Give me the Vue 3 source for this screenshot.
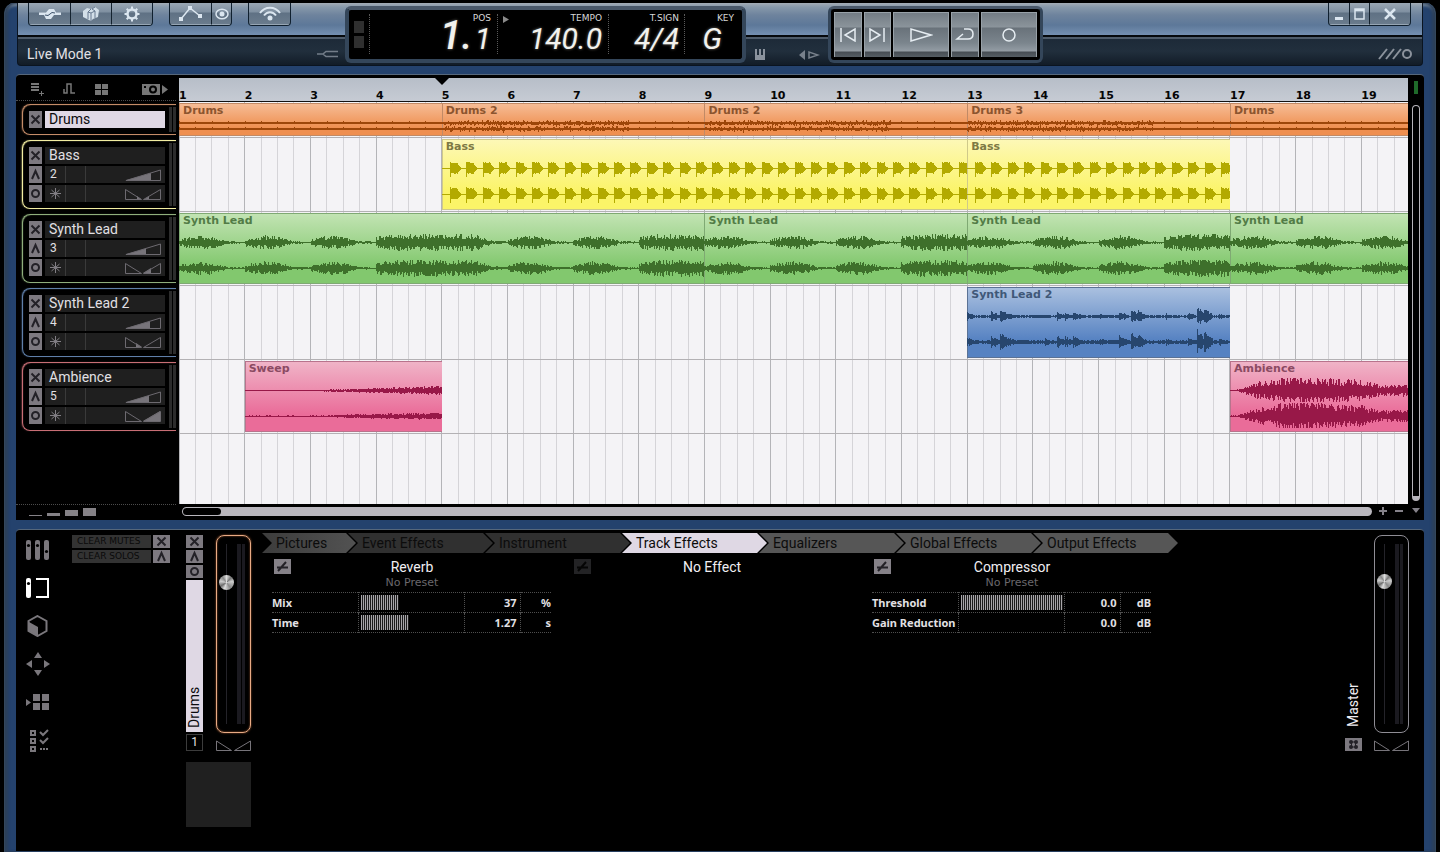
<script setup>
import { ref } from 'vue'

const BARS = 18.71
const BAR_W = 65.64

function makeRandom(seed) {
  let s = seed
  return () => {
    s = (s * 1664525 + 1013904223) % 4294967296
    return s / 4294967296
  }
}

function envelope(points, x) {
  for (let i = 1; i < points.length; i++) {
    if (x <= points[i][0]) {
      const [x0, y0] = points[i - 1]
      const [x1, y1] = points[i]
      return y0 + ((y1 - y0) * (x - x0)) / (x1 - x0)
    }
  }
  return points[points.length - 1][1]
}

const leadPeaks = [
  [0, 4, 4], [24, 6, 5], [33, 3, 8], [36, 9, 5], [43, 5, 3], [66, 8, 2], [78, 4, 3], [90, 5, 5], [98, 6, 4],
  [106, 6, 5], [133, 6, 3], [152, 8, 5], [164, 7, 7], [171, 6, 6], [199, 6, 3], [221, 5, 4], [230, 5, 9], [237, 6, 8], [252, 5, 3]
]

const shapes = {
  ticks(x) {
    const p = (x + 0.5) % 16.41
    return p < 1 ? [2, 1] : [1, 1]
  },
  beats(x, rnd) {
    if (x > 186) return shapes.ticks(x)
    return [1 + rnd() * rnd() * 3, 1 + rnd() * rnd() * rnd() * 3]
  },
  bass(x, rnd) {
    const p = (x + 9) % 16.41
    if (x < 7 || p > 11) return [0.5, 0.5]
    if (p < 1) return [7, 9]
    if (p < 8) return [5.5 + rnd(), 4.5 + rnd()]
    return [Math.max(0.5, 12 - p), Math.max(0.5, 12 - p)]
  },
  synth(x, rnd) {
    const bar = Math.floor(x / BAR_W)
    const p = x / BAR_W - bar
    let a
    if (bar % 4 === 3) a = envelope([[0, 5], [0.3, 7], [1, 7]], p)
    else if (bar % 8 === 4) a = envelope([[0, 7], [0.5, 7], [0.75, 2], [1, 1]], p)
    else a = envelope([[0, 3], [0.3, 6], [0.5, 5], [0.72, 1.4], [1, 0.8]], p)
    return [a * (0.45 + rnd() * 0.8), a * (0.45 + rnd() * 0.8)]
  },
  lead(x, rnd, low) {
    let a = 0.8 + rnd()
    for (const [c, w, h] of leadPeaks) {
      const d = x - c
      if (d >= 0 && d < w + 3) a = Math.max(a, h * (1 - d / (w + 6)) * (0.6 + rnd() * 0.5))
    }
    const k = low ? 1.35 : 1
    return [a * k, a * k * (0.7 + rnd() * 0.3)]
  },
  sweep(x, rnd, low) {
    const a = envelope([[0, 0.8], [75, 0.8], [130, 2.5], [197, low ? 3.5 : 4.5]], x)
    return [a * (0.5 + rnd() * 0.6), a * (0.5 + rnd() * 0.6)]
  },
  swell(x, rnd) {
    const a = envelope([[0, 0.7], [8, 1], [28, 8], [40, 9], [62, 14], [80, 14], [100, 11], [130, 10], [150, 5], [180, 6]], x)
    return [Math.min(13, a * (0.45 + rnd() * 0.75)), Math.min(12, a * (0.45 + rnd() * 0.65))]
  }
}

function wave(shape, width, mid, seed, low) {
  const rnd = makeRandom(seed)
  let top = ''
  let bottom = ''
  for (let x = 0; x < width; x++) {
    const [u, d] = shapes[shape](x, rnd, low)
    const yu = (mid - u).toFixed(1)
    const yd = (mid + d).toFixed(1)
    top += `L${x} ${yu}L${x + 1} ${yu}`
    bottom = `L${x + 1} ${yd}L${x} ${yd}` + bottom
  }
  return `M0 ${mid}${top}${bottom}Z`
}

function clip(name, from, to, shape, seed) {
  const width = Math.round((Math.min(to, 1 + BARS) - from) * BAR_W)
  const small = shape === 'ticks' || shape === 'beats'
  return {
    name,
    column: `${from} / ${Math.min(to, 20)}`,
    width,
    height: small ? 34 : 72,
    d: small
      ? wave(shape, width, 21, seed) + wave(shape, width, 27, seed + 7)
      : wave(shape, width, 30, seed) + wave(shape, width, 56, seed + 5, true)
  }
}

const lanes = [
  {
    color: 'orange',
    clips: [
      clip('Drums', 1, 5, 'ticks', 3),
      clip('Drums 2', 5, 9, 'beats', 11),
      clip('Drums 2', 9, 13, 'beats', 12),
      clip('Drums 3', 13, 17, 'beats', 13),
      clip('Drums', 17, 20, 'ticks', 3)
    ]
  },
  { color: 'yellow', clips: [clip('Bass', 5, 13, 'bass', 21), clip('Bass', 13, 17, 'bass', 22)] },
  {
    color: 'green',
    clips: [
      clip('Synth Lead', 1, 9, 'synth', 31),
      clip('Synth Lead', 9, 13, 'synth', 32),
      clip('Synth Lead', 13, 17, 'synth', 33),
      clip('Synth Lead', 17, 20, 'synth', 34)
    ]
  },
  { color: 'blue', clips: [clip('Synth Lead 2', 13, 17, 'lead', 41)] },
  { color: 'pink', clips: [clip('Sweep', 2, 5, 'sweep', 51), clip('Ambience', 17, 20, 'swell', 52)] }
]

const gridLines = Array.from({ length: 75 }, (_, i) => ({
  x: `${((i / 4 / BARS) * 100).toFixed(3)}%`,
  bar: i % 4 === 0
}))

const tracks = [
  { name: 'Drums', color: 'orange', selected: true },
  { name: 'Bass', color: 'yellow', num: 2, vol: 26, fill: 'M12 8l4 3h-4zM20 11l4-3v3z' },
  { name: 'Synth Lead', color: 'green', num: 3, vol: 21, fill: 'M18 11l8-5v5z' },
  { name: 'Synth Lead 2', color: 'blue', num: 4, vol: 25, fill: 'M17 11l-6-4v4z' },
  { name: 'Ambience', color: 'pink', num: 5, vol: 24, fill: 'M18 11L35 1v10z' }
]

const tabs = [
  { name: 'Pictures', tone: 'mid' },
  { name: 'Event Effects', tone: 'dark' },
  { name: 'Instrument', tone: 'dark' },
  { name: 'Track Effects', tone: 'active' },
  { name: 'Equalizers', tone: 'light' },
  { name: 'Global Effects', tone: 'light' },
  { name: 'Output Effects', tone: 'light' }
]

const effects = ref([
  {
    name: 'Reverb',
    preset: 'No Preset',
    params: [
      { name: 'Mix', level: 37, value: '37', unit: '%' },
      { name: 'Time', level: 47, value: '1.27', unit: 's' }
    ]
  },
  { name: 'No Effect', off: true, params: [] },
  {
    name: 'Compressor',
    preset: 'No Preset',
    params: [
      { name: 'Threshold', level: 100, value: '0.0', unit: 'dB' },
      { name: 'Gain Reduction', level: 0, value: '0.0', unit: 'dB' }
    ]
  }
])

const trackLevel = ref(81)
const masterLevel = ref(82)
</script>

<template>
  <div class="window">
    <header class="header">
      <div class="head-left">
        <div class="head-top">
          <div class="btn-group">
            <button class="hbtn" aria-label="Connections">
              <svg width="24" height="14" viewBox="0 0 24 14"><path d="M1 5.500h7l3-3.500h5l2 3.500h5v2.500h-7l-3 4H8L6 8H1z" fill="#dbe6f0" /><path d="M7 8l3 .5 4-3 3 .5" fill="none" stroke="#3b5069" /></svg>
            </button>
            <button class="hbtn" aria-label="Packs">
              <svg width="18" height="16" viewBox="0 0 18 16"><path d="M1 5l4-3 4 1 4-2 4 3-1 7-5 2-2 2-4-2-4-2z" fill="#d3dfe9" /><path d="M6 13V6l3-3M6 6l3 1v8M9 7l4-2v7M13 1l-3 2 3 2" fill="none" stroke="#66798f" /></svg>
            </button>
            <button class="hbtn" aria-label="Settings">
              <svg width="16" height="16" viewBox="0 0 16 16"><circle cx="8" cy="8" r="4.500" fill="none" stroke="#dbe6f0" stroke-width="2.500" /><path d="M8 .5v3M8 12.500v3M.5 8h3M12.500 8h3M2.700 2.700l2 2M11.300 11.300l2 2M2.700 13.300l2-2M11.300 4.700l2-2" stroke="#dbe6f0" stroke-width="2" /></svg>
            </button>
          </div>
          <div class="btn-group">
            <button class="hbtn" aria-label="Automation">
              <svg width="24" height="17" viewBox="0 0 24 17"><path d="M2 14L11 3l10 8" fill="none" stroke="#dbe6f0" stroke-width="1.500" /><path d="M0 12h4v4H0zM9 1h4v4H9zM19 9h4v4h-4z" fill="#dbe6f0" /></svg>
            </button>
            <button class="hbtn narrow" aria-label="Visibility">
              <svg width="14" height="12" viewBox="0 0 14 12"><ellipse cx="7" cy="6" rx="6" ry="4.800" fill="none" stroke="#dbe6f0" stroke-width="1.500" /><circle cx="7" cy="6" r="2.500" fill="#dbe6f0" /></svg>
            </button>
          </div>
          <div class="btn-group">
            <button class="hbtn" aria-label="Network">
              <svg width="22" height="15" viewBox="0 0 22 15"><path d="M1 7c5-7 15-7 20 0M5 9.500c3-4.500 9-4.500 12 0" fill="none" stroke="#dbe6f0" stroke-width="2" /><circle cx="11" cy="12" r="2.500" fill="#dbe6f0" /></svg>
            </button>
          </div>
        </div>
        <div class="head-strip">
          <span class="song">Live Mode 1</span>
          <svg width="22" height="10" viewBox="0 0 22 10"><path d="M0 5h7M21 2.500H9L6 5l3 2.500h12" fill="none" stroke="#737d89" stroke-width="1.500" /></svg>
        </div>
      </div>

      <section class="lcd" aria-label="Transport display">
        <div class="lcd-leds"><i></i><i></i></div>
        <div class="cell pos">
          <span class="lbl">POS</span>
          <span class="val"><b>1.</b>1</span>
        </div>
        <div class="cell tempo">
          <svg class="tri" width="6" height="7" viewBox="0 0 6 7"><path d="M0 0l6 3.500L0 7z" fill="#8a8a8a" /></svg>
          <span class="lbl">TEMPO</span>
          <span class="val">140.0</span>
        </div>
        <div class="cell sign"><span class="lbl">T.SIGN</span><span class="val">4/4</span></div>
        <div class="cell key"><span class="lbl">KEY</span><span class="val">G</span></div>
      </section>

      <div class="head-mid">
        <svg width="10" height="11" viewBox="0 0 10 11"><path d="M0 0h2v6h2V0h2v6h2V0h2v11H0z" fill="#8a929d" /></svg>
        <svg width="21" height="10" viewBox="0 0 21 10"><path d="M0 5l6-5v10z" fill="#78818c" /><path d="M10 2v6l9-3z" fill="none" stroke="#78818c" stroke-width="1.500" /></svg>
      </div>

      <section class="transport" aria-label="Transport">
        <button class="tbtn" aria-label="Previous"><svg width="18" height="14" viewBox="0 0 18 14"><path d="M2 0v14M16 1v12L6 7z" fill="none" stroke="#e6edf2" stroke-width="1.500" /></svg></button>
        <button class="tbtn" aria-label="Next"><svg width="18" height="14" viewBox="0 0 18 14"><path d="M16 0v14M2 1v12l10-6z" fill="none" stroke="#e6edf2" stroke-width="1.500" /></svg></button>
        <button class="tbtn wide" aria-label="Play"><svg width="24" height="16" viewBox="0 0 24 16"><path d="M2 2v12l20-6z" fill="none" stroke="#e6edf2" stroke-width="1.500" /></svg></button>
        <button class="tbtn" aria-label="Loop"><svg width="20" height="14" viewBox="0 0 20 14"><path d="M9 1h4c3 0 5 2 5 5s-2 5-5 5H2l6-5" fill="none" stroke="#e6edf2" stroke-width="1.500" /></svg></button>
        <button class="tbtn wide" aria-label="Record"><svg width="16" height="16" viewBox="0 0 16 16"><circle cx="8" cy="8" r="6" fill="none" stroke="#e6edf2" stroke-width="1.500" /></svg></button>
      </section>

      <div class="head-right">
        <div class="head-top end">
          <div class="btn-group">
            <button class="wbtn" aria-label="Minimize"><svg width="10" height="14" viewBox="0 0 10 14"><path d="M1 10h8v3H1z" fill="#dbe6f0" /></svg></button>
            <button class="wbtn" aria-label="Maximize"><svg width="11" height="12" viewBox="0 0 11 12"><path d="M1 1h9v10H1zM1 2.500h9" fill="none" stroke="#dbe6f0" stroke-width="1.500" /></svg></button>
            <button class="wbtn close" aria-label="Close"><svg width="14" height="12" viewBox="0 0 14 12"><path d="M2 1l10 10M12 1L2 11" stroke="#dbe6f0" stroke-width="2.500" /></svg></button>
          </div>
        </div>
        <div class="head-strip end">
          <svg width="36" height="12" viewBox="0 0 36 12"><path d="M1 11L9 1M8 11l8-10M15 11l8-10" stroke="#8b929c" stroke-width="2" /><circle cx="29" cy="6" r="4" fill="none" stroke="#8b929c" stroke-width="2" /></svg>
        </div>
      </div>
    </header>

    <main class="arranger">
      <aside class="tracks">
        <div class="tools">
          <button class="plain" aria-label="Add track"><svg width="14" height="14" viewBox="0 0 14 14"><path d="M1 2h8M1 5h8M1 8h8" stroke="#777" stroke-width="2" /><path d="M9 11.500h5M11.500 9v5" stroke="#777" /></svg></button>
          <button class="plain" aria-label="Envelope"><svg width="13" height="12" viewBox="0 0 13 12"><path d="M1 6v4h3V1h4v9h4" fill="none" stroke="#777" stroke-width="1.500" /></svg></button>
          <button class="plain" aria-label="Grid"><svg width="13" height="11" viewBox="0 0 13 11"><path d="M0 0h6v5H0zM7 0h6v5H7zM0 6h6v5H0zM7 6h6v5H7z" fill="#777" /></svg></button>
          <button class="plain cam" aria-label="Snapshot"><svg width="28" height="13" viewBox="0 0 28 13"><path d="M1 1h18v11H1z" fill="#777" /><circle cx="12" cy="6.500" r="4" fill="#000" /><circle cx="12" cy="6.500" r="2" fill="#777" /><path d="M3 3h2v2H3z" fill="#000" /><path d="M21 2l6 4.500-6 4.500z" fill="#777" /></svg></button>
        </div>
        <ul class="track-list">
          <li v-for="t in tracks" :key="t.name" class="track" :class="[t.color, { selected: t.selected }]">
            <div class="track-btns">
              <button class="sq" :aria-label="'Mute ' + t.name"><svg width="13" height="13" viewBox="0 0 13 13"><path d="M2.500 2.500l8 8M10.500 2.500l-8 8" stroke="#232127" stroke-width="2" /></svg></button>
              <template v-if="!t.selected">
                <button class="sq" :aria-label="'Solo ' + t.name"><svg width="13" height="13" viewBox="0 0 13 13"><path d="M3 11L6.500 3 10 11" fill="none" stroke="#232127" stroke-width="2" /></svg></button>
                <button class="sq" :aria-label="'Record ' + t.name"><svg width="13" height="13" viewBox="0 0 13 13"><circle cx="6.500" cy="6.500" r="3.500" fill="none" stroke="#232127" stroke-width="2" /></svg></button>
              </template>
            </div>
            <div class="track-rows">
              <div class="row name">{{ t.name }}</div>
              <template v-if="!t.selected">
                <div class="row split">
                  <span class="num">{{ t.num }}</span><span class="blank"></span>
                  <svg width="36" height="12" viewBox="0 0 36 12"><path :d="`M0 11.500L${t.vol} ${11.5 - t.vol * 0.29}V11.500z`" fill="#77747a" /><path d="M1 11.500L35.500 1v10.500z" fill="none" stroke="#6d6a70" /></svg>
                </div>
                <div class="row split">
                  <span class="num"><svg width="11" height="11" viewBox="0 0 11 11"><path d="M5.500 0v11M0 5.500h11M1.500 2l8 7M9.500 2l-8 7" stroke="#827f85" /></svg></span><span class="blank"></span>
                  <svg width="36" height="12" viewBox="0 0 36 12"><path :d="t.fill" fill="#77747a" /><path d="M.5 11.500V1.500l16 10zM35.500 11.500V1.500L18.500 11.500z" fill="none" stroke="#6d6a70" /></svg>
                </div>
              </template>
            </div>
            <div class="leds"><i></i><i></i></div>
          </li>
        </ul>
      </aside>

      <section class="canvas" aria-label="Timeline">
        <div class="ruler">
          <span v-for="n in 19" :key="n">{{ n }}</span>
          <svg class="head-mark" width="14" height="7" viewBox="0 0 14 7"><path d="M0 0h14L7 7z" /></svg>
        </div>
        <div class="lanes">
          <svg class="grid" aria-hidden="true">
            <line v-for="g in gridLines" :key="g.x" :x1="g.x" :x2="g.x" y1="0" y2="100%" :class="{ bar: g.bar }" />
          </svg>
          <div v-for="l in lanes" :key="l.color" class="lane" :class="l.color">
            <div v-for="(c, i) in l.clips" :key="i" class="clip" :style="{ gridColumn: c.column }">
              <svg :viewBox="`0 0 ${c.width} ${c.height}`" preserveAspectRatio="none"><path :d="c.d" /></svg>
              <span class="clip-name">{{ c.name }}</span>
            </div>
          </div>
        </div>
      </section>

      <div class="vside">
        <i class="lamp"></i>
        <div class="vscroll"></div>
      </div>

      <div class="sizes"><button aria-label="Tiny rows"></button><button aria-label="Small rows"></button><button aria-label="Medium rows"></button><button aria-label="Large rows"></button></div>
      <div class="hside">
        <div class="hscroll"><i></i></div>
        <button class="plain" aria-label="Zoom in"><svg width="8" height="8" viewBox="0 0 8 8"><path d="M4 0v8M0 4h8" stroke="#85828a" stroke-width="2" /></svg></button>
        <button class="plain" aria-label="Zoom out"><svg width="8" height="8" viewBox="0 0 8 8"><path d="M0 4h8" stroke="#85828a" stroke-width="2" /></svg></button>
      </div>
      <button class="plain more" aria-label="More"><svg width="8" height="5" viewBox="0 0 8 5"><path d="M0 0h8L4 5z" fill="#85828a" /></svg></button>
    </main>

    <section class="mixer">
      <nav class="modes">
        <button class="plain" aria-label="Mixer"><svg width="24" height="22" viewBox="0 0 24 22"><rect x="0" y="1" width="5" height="20" rx="2" fill="#7a777c" /><rect x="9" y="1" width="5" height="20" rx="2" fill="#7a777c" /><rect x="18" y="1" width="5" height="20" rx="2" fill="#7a777c" /><circle cx="2.500" cy="6.500" r="1.600" /><circle cx="11.500" cy="6.500" r="1.600" /><circle cx="20.500" cy="12.500" r="1.600" /></svg></button>
        <button class="plain" aria-label="Track view"><svg width="24" height="22" viewBox="0 0 24 22"><rect x="0" y="1" width="5" height="20" rx="2" fill="#fff" /><circle cx="2.500" cy="6.500" r="1.600" /><path d="M10 2h12v18H10" fill="none" stroke="#fff" stroke-width="2" /></svg></button>
        <button class="plain" aria-label="Song view"><svg width="24" height="22" viewBox="0 0 24 22"><path d="M11.500 1l9 5v10l-9 5-9-5V6z" fill="none" stroke="#7a777c" stroke-width="2" /><path d="M3 7l9 5v9l-9-5z" fill="#7a777c" /></svg></button>
        <button class="plain" aria-label="Navigator"><svg width="24" height="24" viewBox="0 0 24 24"><path d="M12 0l4 6H8zM12 24l4-6H8zM0 12l6-4v8zM24 12l-6-4v8z" fill="#7a777c" /></svg></button>
        <button class="plain" aria-label="Pads"><svg width="24" height="18" viewBox="0 0 24 18"><path d="M0 6l5 3.500L0 13zM7 1h7v7H7zM16 1h7v7h-7zM7 10h7v7H7zM16 10h7v7h-7z" fill="#7a777c" /></svg></button>
        <button class="plain" aria-label="Setup"><svg width="24" height="24" viewBox="0 0 24 24"><path d="M5 3h4v4H5zM5 11h4v4H5zM5 19h4v4H5z" fill="none" stroke="#7a777c" stroke-width="2" /><path d="M14 4l3 3 5-5M14 12l3 3 5-5" fill="none" stroke="#7a777c" stroke-width="2" /><path d="M14 20h2v2h-2zM17 20h2v2h-2zM20 20h2v2h-2z" fill="#7a777c" /></svg></button>
      </nav>

      <div class="clears">
        <div class="clear"><span id="cm">CLEAR MUTES</span><button class="sq" aria-labelledby="cm"><svg width="13" height="13" viewBox="0 0 13 13"><path d="M2.500 2.500l8 8M10.500 2.500l-8 8" stroke="#232127" stroke-width="2" /></svg></button></div>
        <div class="clear"><span id="cs">CLEAR SOLOS</span><button class="sq" aria-labelledby="cs"><svg width="13" height="13" viewBox="0 0 13 13"><path d="M3 11L6.500 3 10 11" fill="none" stroke="#232127" stroke-width="2" /></svg></button></div>
      </div>

      <div class="channel">
        <div class="strip">
          <div class="strip-left">
            <button class="sq" aria-label="Mute"><svg width="13" height="13" viewBox="0 0 13 13"><path d="M2.500 2.500l8 8M10.500 2.500l-8 8" stroke="#232127" stroke-width="2" /></svg></button>
            <button class="sq" aria-label="Solo"><svg width="13" height="13" viewBox="0 0 13 13"><path d="M3 11L6.500 3 10 11" fill="none" stroke="#232127" stroke-width="2" /></svg></button>
            <button class="sq" aria-label="Record"><svg width="13" height="13" viewBox="0 0 13 13"><circle cx="6.500" cy="6.500" r="3.500" fill="none" stroke="#232127" stroke-width="2" /></svg></button>
            <div class="vname">Drums</div>
            <div class="index">1</div>
          </div>
          <div class="strip-right">
            <div class="fader orange">
              <input v-model="trackLevel" type="range" min="0" max="100" aria-label="Drums level" />
              <i></i><i></i>
            </div>
            <svg width="36" height="12" viewBox="0 0 36 12"><path d="M.5 11.500V2l15 9.500zM34.500 11.500V2L18.500 11.500z" fill="none" stroke="#77747a" /></svg>
          </div>
        </div>
        <div class="pad"></div>
      </div>

      <div class="center">
        <nav class="tabs">
          <button v-for="t in tabs" :key="t.name" class="tab" :class="t.tone">{{ t.name }}</button>
        </nav>
        <div class="effects">
          <article v-for="(e, n) in effects" :key="e.name" class="effect">
            <div class="effect-head">
              <button class="bypass" :class="{ off: e.off }" :aria-label="'Bypass ' + e.name"><svg width="13" height="11" viewBox="0 0 13 11"><path d="M1 6.500h11M2 10l8-9" :stroke="e.off ? '#050505' : '#232127'" stroke-width="2" /></svg></button>
              <h2>{{ e.name }}</h2>
              <p v-if="e.preset">{{ e.preset }}</p>
            </div>
            <table v-if="e.params.length">
              <tbody>
                <tr v-for="(p, k) in e.params" :key="p.name">
                  <th scope="row"><label :for="`p${n}-${k}`">{{ p.name }}</label></th>
                  <td class="level"><input :id="`p${n}-${k}`" v-model="p.level" type="range" min="0" max="100" :style="{ '--fill': p.level + '%' }" /></td>
                  <td class="value">{{ p.value }}</td>
                  <td class="unit">{{ p.unit }}</td>
                </tr>
              </tbody>
            </table>
          </article>
        </div>
      </div>

      <div class="channel master">
        <div class="strip">
          <div class="strip-left">
            <div class="vname">Master</div>
            <button class="sq" aria-label="Master options"><svg width="11" height="11" viewBox="0 0 11 11"><path d="M2 3h7M2 8h7M3.500 2v7M7.500 2v7" stroke="#232127" /><circle cx="3" cy="3" r="2" fill="#232127" /><circle cx="8" cy="3" r="2" fill="#232127" /><circle cx="3" cy="8" r="2" fill="#232127" /><circle cx="8" cy="8" r="2" fill="#232127" /></svg></button>
          </div>
          <div class="strip-right">
            <div class="fader">
              <input v-model="masterLevel" type="range" min="0" max="100" aria-label="Master level" />
              <i></i><i></i>
            </div>
            <svg width="36" height="12" viewBox="0 0 36 12"><path d="M.5 11.500V2l15 9.500zM34.500 11.500V2L18.500 11.500z" fill="none" stroke="#77747a" /></svg>
          </div>
        </div>
      </div>
    </section>
  </div>
</template>

<style>
body {
  background: #000;
}
</style>

<style scoped>
* {
  box-sizing: border-box;
}
svg {
  display: block;
  flex: none;
}
button {
  font: inherit;
  color: inherit;
  border: 0;
  padding: 0;
  margin: 0;
  background: none;
  display: flex;
  align-items: center;
  justify-content: center;
}
ul,
h2,
p {
  margin: 0;
  padding: 0;
  list-style: none;
}
.window {
  font-family: Roboto, "Noto Sans", sans-serif;
  font-size: 14px;
  color: #e2e0e4;
  min-height: calc(100vh - 3px);
  margin: 3px 4px 0;
  padding: 0 12px 1px;
  display: flex;
  flex-direction: column;
  background: #24426d;
  border: 0 solid #34475c;
  border-width: 0 1px;
  border-radius: 10px 10px 0 0;
  box-shadow: inset 3px 0 3px #2c3f58, inset -3px 0 3px #2c3f58, inset 0 3px 3px #8292a3;
}

/* header */
.header {
  display: flex;
  height: 63px;
  border: solid #0a1420;
  border-width: 0 1px 1px;
  border-radius: 0 0 4px 4px;
  background: linear-gradient(#a3acb5, #8799ab 4px, #6e839d 12px, #5d7899 22px, #7590b2 32px, #06090d 32px, #06090d 34px, #4f5c6b 34px, #4f5c6b 36px, #1d2a38 36px, #212f3d 48px, #121c27 62px);
}
.head-left {
  flex: 0 0 327px;
}
.head-right {
  flex: 1;
}
.head-top {
  display: flex;
  gap: 16px;
  height: 36px;
  padding-left: 10px;
}
.head-top.end {
  justify-content: flex-end;
  padding: 0 11px 0 0;
}
.head-strip {
  display: flex;
  align-items: center;
  justify-content: space-between;
  height: 27px;
  padding: 2px 6px 0 9px;
}
.head-strip.end {
  justify-content: flex-end;
  padding-right: 8px;
}
.btn-group {
  display: flex;
  height: 23px;
  border: 1px solid #10202f;
  border-top: 0;
  border-radius: 0 0 4px 4px;
  overflow: hidden;
  background: linear-gradient(#9aa7b4, #7f90a1 9px, #5f7184 10px, #6b7c8d 22px);
}
.hbtn {
  width: 41px;
  border: 1px solid #96a5b3;
  border-width: 0 0 1px;
}
.hbtn.narrow {
  width: 20px;
}
.hbtn + .hbtn,
.wbtn + .wbtn {
  border-left: 1px solid #14222f;
}
.wbtn {
  width: 20px;
  border-bottom: 1px solid #96a5b3;
}
.wbtn.close {
  width: 41px;
}
.lcd {
  flex: 0 0 401px;
  height: 57px;
  margin-top: 3px;
  display: flex;
  border: 4px solid #34465a;
  border-top-color: #49586a;
  border-radius: 6px;
  background: #000;
}
.lcd-leds {
  width: 20px;
  display: flex;
  flex-direction: column;
  align-items: center;
  justify-content: center;
  gap: 3px;
}
.lcd-leds i {
  width: 10px;
  height: 12px;
  background: #2f2f2f;
}
.cell {
  display: grid;
  border-left: 1px dotted #5a5a5a;
  margin: 4px 0 5px;
  padding-right: 6px;
}
.cell > * {
  grid-area: 1 / 1;
  justify-self: end;
}
.cell .tri {
  justify-self: start;
  margin: 2px 0 0 5px;
}
.pos {
  width: 128px;
}
.tempo {
  width: 111px;
}
.sign {
  width: 76px;
  padding-right: 5px;
}
.key {
  flex: 1;
  padding-right: 8px;
}
.lbl {
  font: 9px/9px "DejaVu Sans", sans-serif;
  color: #d8d8d8;
}
.val {
  align-self: end;
  font-size: 30px;
  line-height: 30px;
  font-style: italic;
  color: #f2f2ee;
  text-shadow: 0 0 3px #77736a;
}
.key .val {
  margin-right: 12px;
}
.val b {
  font-size: 40px;
  font-weight: 500;
  margin-right: 2px;
}
.head-mid {
  flex: 0 0 82px;
  display: flex;
  align-items: flex-end;
  justify-content: space-between;
  padding: 0 8px 5px 9px;
}
.transport {
  flex: 0 0 215px;
  height: 57px;
  margin-top: 3px;
  display: flex;
  gap: 2px;
  padding: 3px;
  border: 3px solid #34465a;
  border-top-color: #49586a;
  border-radius: 6px;
  background: #000;
}
.tbtn {
  flex: 27;
  border: 1px solid #98a1a8;
  border-width: 1px 1px 0;
  background: linear-gradient(#737c84, #8b949b 14px, #69727a 15px, #7b858d 30px, #939ca4 38px, #464d54 39px, #565e65);
}
.tbtn.wide {
  flex: 57;
}

/* arranger */
.arranger {
  display: grid;
  grid-template-columns: 163px minmax(0, 1fr) 16px;
  grid-template-rows: auto 16px;
  margin: 8px -1px 0;
  padding-top: 3px;
  border-top: 1px solid #56677b;
  border-radius: 4px 4px 0 0;
  background: #000;
}
.tracks {
  padding-right: 3px;
}
.tools {
  display: flex;
  align-items: center;
  gap: 19px;
  height: 23px;
  padding: 0 7px 0 14px;
  border-bottom: 1px dotted #4c4c4c;
}
.tools .cam {
  margin-left: auto;
}
.track-list {
  display: flex;
  flex-direction: column;
  gap: 5px;
  padding: 3px 0 0 6px;
}
.track {
  display: flex;
  gap: 3px;
  padding: 6px 0 6px 6px;
  border: 1px solid var(--edge);
  border-right: 0;
  border-radius: 8px 0 0 8px;
  box-shadow: inset 1px 1px 1px -1px var(--edge), -1px 0 2px -1px var(--edge);
}
.track.orange { --edge: #c58c68; }
.track.yellow { --edge: #f3eea2; }
.track.green { --edge: #8fae7c; }
.track.blue { --edge: #5f7fa9; }
.track.pink { --edge: #c86e75; }
.track-btns {
  display: flex;
  flex-direction: column;
  gap: 2px;
}
.sq {
  height: 17px;
  width: 13px;
  background: #7d7980;
}
.track-rows {
  flex: 1;
  display: flex;
  flex-direction: column;
  gap: 2px;
}
.row {
  height: 17px;
  line-height: 17px;
  padding: 0 4px;
  background: #1f1f1f;
}
.selected .name {
  background: #dfd8e4;
  color: #0b0b0d;
}
.split {
  display: flex;
  align-items: center;
  justify-content: space-between;
  font-size: 12px;
}
.num {
  width: 17px;
  height: 17px;
  padding-left: 1px;
  display: flex;
  align-items: center;
  border-right: 1px solid #3a3a3a;
}
.blank {
  width: 20px;
  height: 17px;
  margin-right: auto;
  border-right: 1px solid #3a3a3a;
}
.leds {
  width: 7px;
  margin: -4px 0 -4px 1px;
  display: flex;
  gap: 1px;
}
.leds i {
  flex: 1;
  background: #2c2c2c;
}

.canvas {
  min-height: 426px;
  display: flex;
  flex-direction: column;
  overflow: hidden;
}
.ruler,
.lane {
  display: grid;
  grid-template-columns: repeat(18, minmax(0, 1fr)) minmax(0, 0.71fr);
}
.ruler {
  position: relative;
  height: 24px;
  align-items: end;
  background: linear-gradient(#b7bec8, #c6cbd4);
  border-bottom: 1px solid #111;
  color: #050505;
  font: bold 11px/11px "DejaVu Sans", sans-serif;
}
.head-mark {
  position: absolute;
  left: 21.38%;
  margin-left: -7px;
  top: 0;
}
.lanes {
  position: relative;
  flex: 1;
  background: #f4f3f6;
}
.grid {
  position: absolute;
  inset: 0;
  width: 100%;
  height: 100%;
  shape-rendering: crispEdges;
}
.grid line {
  stroke: #d5d4d8;
}
.grid .bar {
  stroke: #b4b4b8;
}
.lane {
  position: relative;
  height: 74px;
  padding: 1px 0;
  border-bottom: 1px solid #b3b1b4;
}
.lane.orange {
  height: 36px;
}
.clip {
  position: relative;
  overflow: hidden;
  background: linear-gradient(var(--top), var(--low) 75%);
  box-shadow: inset 1px 1px var(--line), inset 0 -1px var(--line);
}
.clip svg {
  position: absolute;
  inset: 0;
  width: 100%;
  height: 100%;
  fill: var(--wave);
  shape-rendering: crispEdges;
}
.clip-name {
  position: relative;
  display: block;
  padding-left: 4px;
  font: bold 11px/15px "DejaVu Sans", sans-serif;
  color: var(--text);
}
.lane.orange { --top: #f6be98; --low: #ef8f50; --line: #c18a66; --wave: #9d4609; --text: #8c552f; }
.lane.yellow { --top: #fdf8b8; --low: #fbf468; --line: #cfc98a; --wave: #b3aa00; --text: #7e7944; }
.lane.green { --top: #c3e4b4; --low: #82c86e; --line: #7fa973; --wave: #3e702b; --text: #527c46; }
.lane.blue { --top: #abc1e0; --low: #5682c2; --line: #5b7295; --wave: #27466e; --text: #3f5878; }
.lane.pink { --top: #f0b5c8; --low: #ea6c99; --line: #b8738c; --wave: #981848; --text: #8a4a62; }

.vside {
  display: flex;
  flex-direction: column;
  align-items: center;
}
.lamp {
  width: 4px;
  height: 13px;
  margin-top: 3px;
  background: #1f6a2a;
}
.vscroll {
  flex: 1;
  width: 8px;
  margin: 11px 0 3px;
  border: 1px solid #b8b5bb;
  border-bottom-width: 5px;
  border-radius: 4px;
}
.sizes {
  display: flex;
  align-items: flex-end;
  gap: 5px;
  padding: 0 0 4px 13px;
  margin-right: 3px;
  border-top: 1px dotted #4c4c4c;
}
.sizes button {
  width: 13px;
  height: 1px;
  background: #858287;
}
.sizes button:nth-child(2) { height: 3px; }
.sizes button:nth-child(3) { height: 6px; }
.sizes button:nth-child(4) { height: 8px; }
.hside {
  display: flex;
  align-items: center;
  gap: 8px;
  padding: 0 5px 2px 3px;
}
.hscroll {
  flex: 1;
  height: 9px;
  padding: 1px;
  margin-right: -1px;
  border-radius: 5px;
  background: #b9b6bd;
}
.hscroll i {
  display: block;
  width: 38px;
  height: 7px;
  border-radius: 4px;
  background: #000;
}
.more {
  height: 13px;
}

/* mixer */
.mixer {
  flex: 1;
  display: flex;
  margin: 9px -1px 0;
  padding: 5px 14px 24px 10px;
  border-top: 1px solid #56677b;
  border-radius: 4px 4px 0 0;
  background: #000;
}
.modes {
  width: 46px;
  display: flex;
  flex-direction: column;
}
.modes button {
  width: 24px;
  height: 38px;
}
.modes button:first-child {
  height: 30px;
  margin-bottom: 4px;
}
.clears {
  width: 114px;
  display: flex;
  flex-direction: column;
  gap: 2px;
}
.clear {
  display: flex;
  gap: 2px;
}
.clear span {
  width: 79px;
  height: 13px;
  padding-left: 5px;
  background: #333;
  color: #0a0a0a;
  font: 9px/13px "DejaVu Sans", sans-serif;
}
.mixer .sq {
  width: 17px;
  height: 13px;
}
.channel {
  width: 66px;
}
.strip {
  display: flex;
  gap: 13px;
}
.strip-left {
  width: 17px;
  display: flex;
  flex-direction: column;
  gap: 2px;
}
.vname {
  flex: 1;
  width: 17px;
  writing-mode: vertical-rl;
  transform: rotate(180deg);
  line-height: 17px;
  padding: 4px 0;
  background: #dfd8e4;
  color: #0b0b0d;
}
.index {
  height: 17px;
  border: 1px solid #3c3c3c;
  font-size: 12px;
  line-height: 15px;
  text-align: center;
}
.fader {
  display: flex;
  width: 35px;
  height: 198px;
  padding: 8px 5px 8px 2px;
  gap: 1px;
  border: 1px solid #8f8d95;
  border-radius: 8px;
}
.fader.orange {
  border-color: #e8aa84;
  box-shadow: 0 0 2px #a45a30, inset 0 0 2px #a45a30;
}
.fader i {
  width: 4px;
  background: #1b1a20;
}
.fader input {
  appearance: none;
  writing-mode: vertical-lr;
  direction: rtl;
  width: 15px;
  height: 180px;
  margin: 0 2px 0 0;
  background: linear-gradient(90deg, transparent 7px, #242329 7px, #242329 8px, transparent 8px);
}
.fader input::-webkit-slider-thumb {
  appearance: none;
  width: 15px;
  height: 15px;
  border-radius: 50%;
  background: conic-gradient(#ddd, #777 12%, #ccc 22%, #888 40%, #ddd 55%, #6d6d6d 66%, #ccc 78%, #888 90%, #ddd);
}
.strip-right svg {
  margin-top: 6px;
}
.pad {
  width: 65px;
  height: 65px;
  margin-top: 11px;
  background: #202020;
}
.center {
  flex: 1;
  min-width: 0;
  padding-left: 10px;
}
.tabs {
  display: flex;
  margin-top: -2px;
}
.tab {
  width: 145px;
  height: 20px;
  margin-left: -8px;
  padding-left: 14px;
  justify-content: flex-start;
  color: #0c0c0c;
  background: #565656;
  clip-path: polygon(0 0, calc(100% - 10px) 0, 100% 50%, calc(100% - 10px) 100%, 0 100%, 10px 50%);
}
.tab:first-child {
  width: 94px;
  margin-left: 0;
}
.tab.mid { background: linear-gradient(90deg, #3c3c3c, #525252); }
.tab.dark { background: #303030; }
.tab.active { background: #dfd8e4; }
.effects {
  display: grid;
  grid-template-columns: repeat(3, 280px);
  gap: 20px;
  margin: 6px 0 0 10px;
}
.effect-head {
  position: relative;
  height: 33px;
  text-align: center;
}
.bypass {
  position: absolute;
  left: 2px;
  top: 0;
  width: 17px;
  height: 15px;
  background: #858188;
}
.bypass.off {
  background: #232325;
}
h2 {
  font-size: 14px;
  font-weight: 400;
  line-height: 16px;
  color: #f0eef2;
}
.effect-head p {
  font: 11px/16px "DejaVu Sans", sans-serif;
  color: #6a686c;
}
table {
  width: 279px;
  border-collapse: collapse;
  table-layout: fixed;
  font: bold 11px/12px "Noto Sans", sans-serif;
}
tr {
  height: 20px;
  border: dotted #4e4e4e;
  border-width: 1px 0;
}
th {
  width: 86px;
  padding: 0;
  text-align: left;
  white-space: nowrap;
}
td {
  padding: 0 3px 0 0;
  text-align: right;
  border-left: 1px dotted #4e4e4e;
}
.level {
  width: 106px;
  padding: 0;
}
.value {
  width: 56px;
}
.unit {
  padding: 0;
}
.level input {
  appearance: none;
  display: block;
  width: 102px;
  height: 15px;
  margin: 0 0 0 2px;
  background: repeating-linear-gradient(90deg, #a8a6aa 0 1px, #1c1c1c 1px 2px) 0 0 / var(--fill) 100% no-repeat;
}
.level input::-webkit-slider-thumb {
  appearance: none;
  width: 1px;
  height: 15px;
}
.master {
  width: 65px;
}
.master .vname {
  background: none;
  color: #f0eef2;
  padding: 8px 0 0;
}
.master .strip {
  gap: 12px;
}
.master .strip-left {
  gap: 3px;
}
</style>
